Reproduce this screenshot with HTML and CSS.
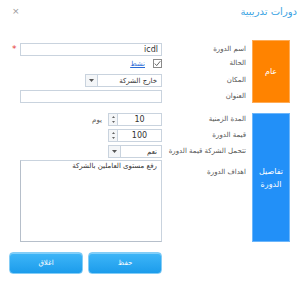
FILE: index.html
```html
<!DOCTYPE html>
<html lang="ar" dir="rtl">
<head>
  <meta charset="UTF-8" />
  <title>دورات تدريبية</title>
  <link rel="stylesheet" href="styles.css">
</head>
<body>
  <div class="dialog">
    <div class="header">
      <span class="title">دورات تدريبية</span>
      <span class="close">&times;</span>
    </div>

    <div class="section general">
      <div class="tab orange">عام</div>

      <label class="lbl">اسم الدورة</label>
      <div class="field">
        <input class="txt wide" type="text" value="icdl">
        <span class="req">*</span>
      </div>

      <label class="lbl">الحالة</label>
      <div class="field">
        <span class="check">
          <svg width="7" height="7" viewBox="0 0 7 7"><path d="M0.8 3.6 L2.7 5.6 L6.3 1.2" fill="none" stroke="#555" stroke-width="0.9"/></svg>
        </span>
        <a class="link" href="#">نشط</a>
      </div>

      <label class="lbl">المكان</label>
      <div class="field">
        <div class="combo place">
          <span class="val">خارج الشركة</span>
          <span class="drop"><svg width="5" height="3" viewBox="0 0 5 3"><path d="M0 0 H5 L2.5 3 Z" fill="#555"/></svg></span>
        </div>
      </div>

      <label class="lbl">العنوان</label>
      <div class="field">
        <input class="txt wide" type="text" value="">
      </div>
    </div>

    <div class="section details">
      <div class="tab blue">تفاصيل<br>الدورة</div>

      <label class="lbl">المدة الزمنية</label>
      <div class="field">
        <div class="spin">
          <span class="num">10</span>
          <span class="arrows">
            <svg width="3" height="7" viewBox="0 0 3 7"><path d="M0 2 L1.5 0 L3 2 Z M0 5 L1.5 7 L3 5 Z" fill="#666"/></svg>
          </span>
        </div>
        <span class="unit">يوم</span>
      </div>

      <label class="lbl">قيمة الدورة</label>
      <div class="field">
        <div class="spin">
          <span class="num">100</span>
          <span class="arrows">
            <svg width="3" height="7" viewBox="0 0 3 7"><path d="M0 2 L1.5 0 L3 2 Z M0 5 L1.5 7 L3 5 Z" fill="#666"/></svg>
          </span>
        </div>
      </div>

      <label class="lbl">تتحمل الشركة قيمة الدورة</label>
      <div class="field">
        <div class="combo small">
          <span class="val">نعم</span>
          <span class="drop"><svg width="5" height="3" viewBox="0 0 5 3"><path d="M0 0 H5 L2.5 3 Z" fill="#555"/></svg></span>
        </div>
      </div>

      <label class="lbl top">اهداف الدورة</label>
      <div class="field">
        <textarea class="area">رفع مستوى العاملين بالشركة</textarea>
      </div>
    </div>

    <div class="actions">
      <button class="btn">حفظ</button>
      <button class="btn">اغلاق</button>
    </div>
  </div>
</body>
</html>
```

FILE: styles.css
```css
html, body {
  margin: 0;
  padding: 0;
  background-color: #fff;
  overflow: hidden;
}

body {
  font-family: "DejaVu Sans", sans-serif;
  font-size: 7px;
  color: #444;
  width: 300px;
  height: 290px;
}

.header {
  display: flex;
  justify-content: space-between;
  align-items: center;
  height: 20px;
  padding: 1px 3px 0 12px;
  margin-bottom: 19px;
}

.title {
  font-size: 10px;
  color: #3aa3e3;
}

.close {
  font-size: 9px;
  color: #999;
}

.section {
  display: grid;
  grid-template-columns: 38px 90px 142px;
  padding-right: 10px;
}

.general {
  grid-template-rows: 16px 14px 17px 16px;
}

.details {
  margin-top: 10px;
  grid-template-rows: 13px 16px 16px 84px;
}

.tab {
  grid-column: 1;
  grid-row: 1 / -1;
  display: flex;
  align-items: center;
  justify-content: center;
  text-align: center;
  color: #fff;
  font-size: 8px;
  line-height: 13px;
  box-sizing: border-box;
}

.orange {
  background-color: #ff8300;
  border: 1px solid #ffab55;
}

.blue {
  background-color: #2290f8;
  border: 1px solid #6cb6fb;
}

.lbl {
  grid-column: 2;
  align-self: end;
  line-height: 13px;
  padding-right: 6px;
  color: #555;
  white-space: nowrap;
}

.lbl.top {
  align-self: start;
  padding-top: 8px;
}

.field {
  grid-column: 3;
  align-self: end;
  display: flex;
  align-items: center;
  height: 13px;
  position: relative;
}

.details .field:last-of-type {
  height: auto;
}

.txt {
  box-sizing: border-box;
  height: 13px;
  border: 1px solid #c9d3de;
  padding: 0 3px;
  font-family: "DejaVu Sans", sans-serif;
  font-size: 8px;
  color: #333;
  outline: none;
  direction: rtl;
}

.wide {
  width: 142px;
}

.req {
  position: absolute;
  left: -8px;
  top: 1px;
  color: #e53935;
  font-size: 9px;
}

.check {
  box-sizing: border-box;
  width: 9px;
  height: 9px;
  border: 1px solid #8a8a8a;
  background-color: #fff;
  display: flex;
  align-items: center;
  justify-content: center;
}

.link {
  color: #2a6ad6;
  margin-right: 8px;
  font-size: 7px;
}

.combo {
  box-sizing: border-box;
  height: 13px;
  border: 1px solid #c9d3de;
  display: flex;
  align-items: center;
  background-color: #fff;
}

.place {
  width: 77px;
}

.small {
  width: 54px;
}

.val {
  flex: 1;
  padding-right: 4px;
  color: #333;
}

.drop, .arrows {
  width: 11px;
  height: 100%;
  border-right: 1px solid #c9d3de;
  background-color: #f4f6f8;
  display: flex;
  align-items: center;
  justify-content: center;
}

.arrows {
  width: 8px;
}

.spin {
  box-sizing: border-box;
  width: 54px;
  height: 13px;
  border: 1px solid #c9d3de;
  display: flex;
  align-items: center;
  font-size: 8px;
}

.num {
  flex: 1;
  text-align: center;
  color: #333;
}

.unit {
  margin-right: 6px;
  color: #555;
}

.area {
  box-sizing: border-box;
  width: 142px;
  height: 82px;
  border: 1px solid #c9d3de;
  border-left-color: #b6bfca;
  border-bottom-color: #b6bfca;
  resize: none;
  padding: 1px 4px;
  font-family: "DejaVu Sans", sans-serif;
  font-size: 7px;
  color: #333;
  outline: none;
}

.actions {
  display: flex;
  gap: 5px;
  padding-right: 138px;
  margin-top: 10px;
}

.btn {
  width: 74px;
  height: 22px;
  border: 1px solid #84cdf6;
  border-radius: 4px;
  background: linear-gradient(#3fb6f8, #1c9ceb);
  box-shadow: inset 0 1px 0 rgba(255,255,255,0.35);
  color: #fff;
  font-family: "DejaVu Sans", sans-serif;
  font-size: 7px;
  padding: 0;
  cursor: pointer;
}
```
